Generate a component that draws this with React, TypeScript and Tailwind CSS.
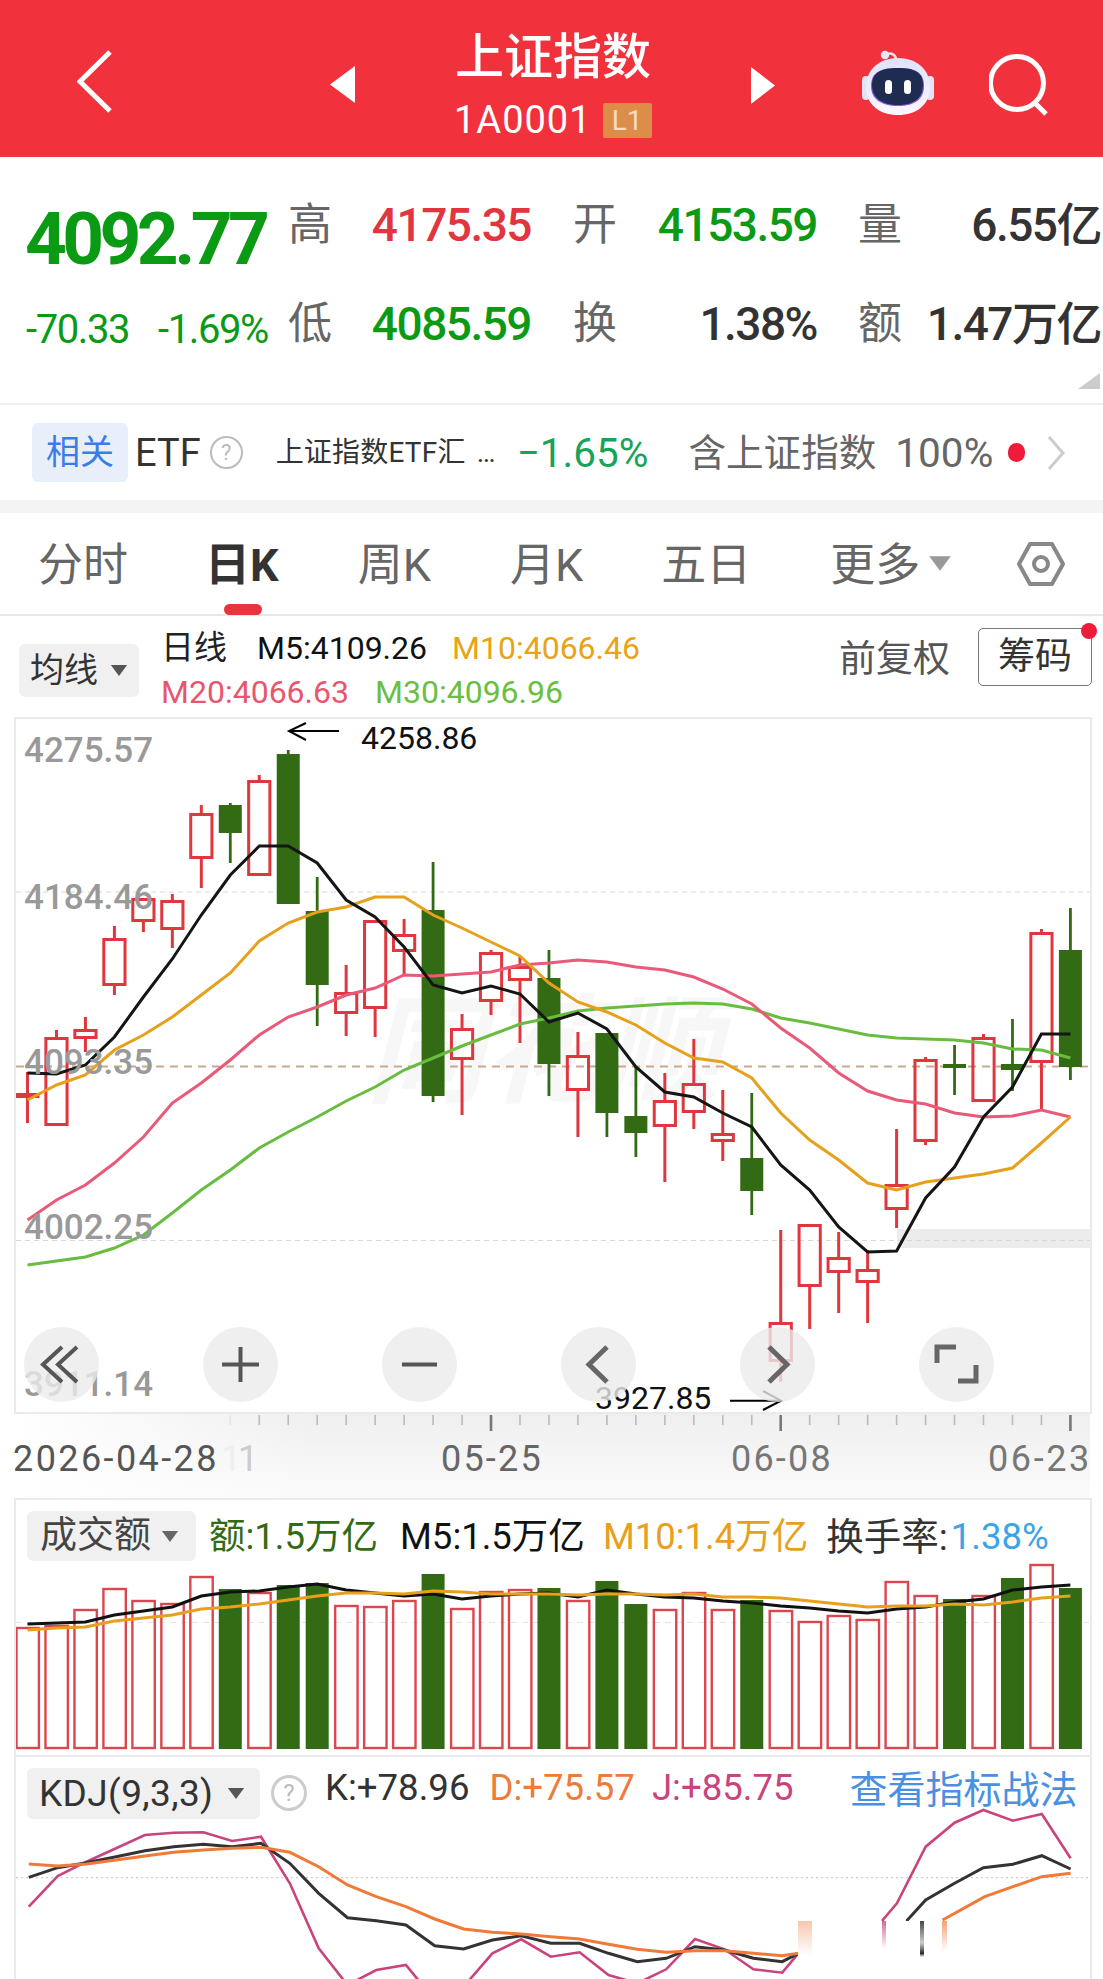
import React from 'react';

const X = (i: number) => 27.5 + 28.97 * i;
const pts = (a: number[]) => a.map((y, i) => `${X(i).toFixed(1)},${y}`).join(' ');
const zp = (a: number[][]) => a.map(([x, y]) => `${(x / 1.4216).toFixed(1)},${(1740 + y / 3).toFixed(1)}`).join(' ');

const RED = '#e0363d';
const GREEN = '#336a14';

// wickTop, bodyTop, bodyBottom, wickBottom, up(1)/down(0)
const candles: number[][] = [
  [1072, 1093, 1098, 1123, 2],
  [1030, 1037, 1126, 1126, 1],
  [1017, 1029, 1039, 1052, 1],
  [926, 938, 986, 995, 1],
  [898, 898, 922, 932, 1],
  [894, 900, 930, 948, 1],
  [805, 813, 859, 888, 1],
  [803, 805, 833, 863, 0],
  [775, 780, 876, 876, 1],
  [750, 754, 904, 904, 0],
  [877, 911, 985, 1026, 0],
  [965, 992, 1014, 1036, 1],
  [920, 920, 1009, 1037, 1],
  [919, 934, 952, 975, 1],
  [862, 910, 1096, 1102, 0],
  [1014, 1028, 1060, 1115, 1],
  [950, 952, 1002, 1015, 1],
  [957, 966, 981, 1043, 1],
  [950, 978, 1064, 1096, 0],
  [1032, 1055, 1091, 1137, 1],
  [1033, 1033, 1113, 1137, 0],
  [1067, 1116, 1133, 1157, 0],
  [1073, 1100, 1127, 1182, 1],
  [1039, 1083, 1113, 1129, 1],
  [1090, 1133, 1142, 1161, 1],
  [1093, 1158, 1191, 1215, 0],
  [1230, 1322, 1362, 1382, 1],
  [1224, 1224, 1287, 1329, 1],
  [1232, 1257, 1273, 1313, 1],
  [1250, 1269, 1283, 1323, 1],
  [1129, 1184, 1210, 1228, 1],
  [1057, 1059, 1142, 1145, 1],
  [1045, 1064, 1068, 1095, 0],
  [1034, 1037, 1102, 1102, 1],
  [1019, 1064, 1070, 1091, 0],
  [929, 932, 1063, 1110, 1],
  [908, 950, 1067, 1080, 0],
];

const ma5 = [1073, 1074, 1065, 1037, 997, 959, 915, 875, 846, 846, 863, 900, 917, 947, 985, 993, 986, 994, 1022, 1013, 1029, 1067, 1092, 1097, 1113, 1127, 1165, 1190, 1227, 1252, 1251, 1198, 1167, 1117, 1087, 1034, 1034];
const ma10 = [1100, 1085, 1075, 1050, 1035, 1017, 995, 973, 941, 923, 912, 907, 897, 897, 915, 928, 942, 956, 983, 1002, 1012, 1025, 1043, 1058, 1062, 1078, 1113, 1140, 1160, 1183, 1190, 1182, 1178, 1174, 1168, 1143, 1117];
const ma20 = [1220, 1200, 1185, 1163, 1137, 1103, 1083, 1060, 1035, 1017, 1007, 995, 988, 975, 976, 974, 972, 965, 963, 960, 962, 967, 970, 977, 989, 1004, 1028, 1048, 1073, 1091, 1100, 1104, 1113, 1117, 1116, 1110, 1117];
const ma30 = [1265, 1261, 1257, 1248, 1235, 1213, 1190, 1170, 1148, 1132, 1117, 1101, 1087, 1070, 1058, 1046, 1035, 1024, 1018, 1011, 1008, 1006, 1004, 1003, 1004, 1009, 1018, 1023, 1029, 1035, 1038, 1039, 1040, 1043, 1049, 1050, 1058];

const vols: number[][] = [
  [1627, 1], [1625, 1], [1609, 1], [1588, 1], [1600, 1], [1603, 1], [1576, 1], [1589, 0], [1592, 1], [1585, 0],
  [1583, 0], [1605, 1], [1606, 1], [1600, 1], [1574, 0], [1608, 1], [1591, 1], [1589, 1], [1588, 0], [1600, 1],
  [1581, 0], [1604, 0], [1609, 1], [1592, 1], [1609, 1], [1600, 0], [1610, 1], [1621, 1], [1615, 1], [1619, 1],
  [1581, 1], [1595, 1], [1599, 0], [1595, 1], [1578, 0], [1564, 1], [1588, 0],
];
const vm5 = [1624, 1623, 1622, 1615, 1611, 1607, 1596, 1592, 1591, 1587, 1584, 1590, 1593, 1596, 1594, 1599, 1596, 1594, 1593, 1597, 1590, 1594, 1597, 1598, 1601, 1603, 1606, 1608, 1611, 1613, 1609, 1607, 1602, 1599, 1590, 1587, 1585];
const vm10 = [1630, 1628, 1627, 1621, 1618, 1615, 1609, 1607, 1604, 1600, 1596, 1593, 1593, 1594, 1591, 1592, 1594, 1594, 1594, 1595, 1594, 1594, 1595, 1594, 1597, 1597, 1598, 1601, 1604, 1607, 1606, 1606, 1604, 1605, 1602, 1598, 1596];

const kLine = [[41, 412], [82, 383], [123, 368], [165, 350], [206, 332], [247, 320], [289, 313], [330, 320], [371, 310], [412, 370], [453, 460], [494, 533], [535, 542], [577, 555], [618, 617], [659, 627], [700, 600], [741, 587], [783, 610], [824, 610], [865, 640], [906, 665], [947, 655], [988, 620], [1030, 630], [1071, 655], [1112, 665], [1135, 640]];
const kTail = [[1290, 640], [1290, 540], [1316, 480], [1357, 430], [1398, 383], [1440, 373], [1481, 347], [1522, 387]];
const dLine = [[41, 372], [82, 378], [123, 372], [165, 360], [206, 348], [247, 337], [289, 330], [330, 325], [371, 322], [412, 337], [453, 380], [494, 435], [535, 470], [577, 500], [618, 537], [659, 567], [700, 577], [741, 582], [783, 590], [824, 597], [865, 613], [906, 628], [947, 637], [988, 632], [1030, 632], [1071, 640], [1112, 647], [1135, 640]];
const dTail = [[1340, 540], [1400, 470], [1440, 440], [1481, 410], [1522, 400]];
const jLine = [[41, 500], [82, 408], [123, 365], [165, 325], [206, 285], [247, 278], [289, 277], [330, 303], [371, 290], [412, 430], [453, 625], [494, 735], [535, 690], [577, 675], [618, 780], [659, 740], [700, 640], [741, 598], [783, 650], [824, 637], [865, 705], [906, 730], [947, 688], [988, 597], [1030, 628], [1071, 688], [1112, 698], [1135, 640]];
const jTail = [[1255, 640], [1255, 540], [1275, 490], [1316, 320], [1357, 248], [1398, 210], [1440, 242], [1481, 222], [1522, 355]];

function Tri({ className }: { className: string }) {
  return (
    <svg viewBox="0 0 20 14" className={className}>
      <path d="M1 1h18L10 13z" fill="currentColor" />
    </svg>
  );
}

function Stat({ label, value, color, w, ml }: { label: string; value: string; color: string; w: string; ml: string }) {
  return (
    <div className={`flex items-center ${w} ${ml}`}>
      <span className="w-[44px] text-[44px] leading-[44px] text-[#666]">{label}</span>
      <span className={`flex-1 text-right text-[46px] leading-[44px] font-medium tracking-[-1.5px] ${color}`}>{value}</span>
    </div>
  );
}

function Round({ children }: { children: React.ReactNode }) {
  return (
    <div className="w-[75px] h-[75px] rounded-full bg-[#ebebeb]/80">
      <svg viewBox="0 0 75 75" className="w-[75px] h-[75px]" fill="none" stroke="#555" strokeWidth="4">
        {children}
      </svg>
    </div>
  );
}

function Watermark() {
  return (
    <div className="absolute left-[350px] top-[275px] text-[118px] leading-[118px] font-bold italic text-[#f7f7f7] whitespace-nowrap">
      同花顺
    </div>
  );
}

function CandleChart() {
  return (
    <svg viewBox="16 719 1074 693" className="block w-[1074px] h-[693px] relative">
      <rect x="897" y="1229" width="193" height="19" fill="#ececec" />
      <line x1="16" x2="1090" y1="892" y2="892" stroke="#d8d8d8" strokeDasharray="5 4" strokeWidth="1" />
      <line x1="16" x2="1090" y1="1240.5" y2="1240.5" stroke="#d8d8d8" strokeDasharray="5 4" strokeWidth="1" />
      <line x1="16" x2="1090" y1="1066.5" y2="1066.5" stroke="#c9a88f" strokeDasharray="8 6" strokeWidth="2" />
      {candles.map((c, i) => {
        const x = X(i);
        const [wt, bt, bb, wb, up] = c;
        if (up === 0) {
          return (
            <g key={i}>
              <line x1={x} x2={x} y1={wt} y2={wb} stroke={GREEN} strokeWidth="2.8" />
              <rect x={x - 11.5} y={bt} width="23" height={bb - bt} fill={GREEN} />
            </g>
          );
        }
        if (up === 2) {
          return (
            <g key={i}>
              <line x1={x} x2={x} y1={wt} y2={wb} stroke={RED} strokeWidth="3" />
              <rect x={x - 12} y={bt} width="24" height={bb - bt} fill={RED} />
            </g>
          );
        }
        return (
          <g key={i}>
            <line x1={x} x2={x} y1={wt} y2={bt} stroke={RED} strokeWidth="3" />
            <line x1={x} x2={x} y1={bb} y2={wb} stroke={RED} strokeWidth="3" />
            <rect x={x - 10.6} y={bt + 1.5} width="21.2" height={bb - bt - 3} fill="none" stroke={RED} strokeWidth="3" />
          </g>
        );
      })}
      <polyline points={pts(ma30)} fill="none" stroke="#68bd41" strokeWidth="3" />
      <polyline points={pts(ma20)} fill="none" stroke="#e85a78" strokeWidth="3" />
      <polyline points={pts(ma10)} fill="none" stroke="#e6a01c" strokeWidth="3" />
      <polyline points={pts(ma5)} fill="none" stroke="#151515" strokeWidth="3" />
      <path d="M339 731H289M306 723L289 731L306 740" fill="none" stroke="#000" strokeWidth="2" />
      <path d="M730 1400.7H781M763 1391L781 1400.7L763 1410" fill="none" stroke="#000" strokeWidth="2" />
    </svg>
  );
}

function AxisTicks() {
  const ticks = Array.from({ length: 37 }, (_, i) => i).filter((i) => i >= 7);
  return (
    <svg viewBox="14 1414 1076 20" className="absolute left-0 top-0 w-[1076px] h-[20px]">
      {ticks.map((i) => {
        const major = i === 16 || i === 26 || i === 36;
        return (
          <line key={i} x1={X(i)} x2={X(i)} y1="1415" y2={major ? 1431 : 1425} stroke={major ? '#777' : i === 7 ? '#e6e6e6' : '#bbb'} strokeWidth={major ? 2.6 : 1.6} />
        );
      })}
    </svg>
  );
}

function VolumeChart() {
  return (
    <svg viewBox="16 1563 1074 190" className="block w-[1074px] h-[190px]">
      <line x1="16" x2="1090" y1="1622.5" y2="1622.5" stroke="#e4e4e4" strokeDasharray="6 5" strokeWidth="1" />
      {vols.map(([t, up], i) => {
        const x = X(i);
        return up ? (
          <rect key={i} x={x - 11} y={t + 1} width="22.4" height={1747 - t} fill="none" stroke="#dc464f" strokeWidth="2.4" />
        ) : (
          <rect key={i} x={x - 11.5} y={t} width="23" height={1749 - t} fill={GREEN} />
        );
      })}
      <polyline points={pts(vm5)} fill="none" stroke="#111" strokeWidth="3" />
      <polyline points={pts(vm10)} fill="none" stroke="#e8a01c" strokeWidth="3" />
    </svg>
  );
}

function KdjChart() {
  return (
    <svg viewBox="16 1805 1074 174" className="block w-[1074px] h-[174px]">
      <defs>
        <linearGradient id="fk" x1="0" y1="0" x2="0" y2="1">
          <stop offset="0" stopColor="#333" stopOpacity="0.9" />
          <stop offset="0.6" stopColor="#333" stopOpacity="0.25" />
          <stop offset="0.9" stopColor="#111" stopOpacity="0.9" />
          <stop offset="1" stopColor="#111" stopOpacity="0" />
        </linearGradient>
        <linearGradient id="fp" x1="0" y1="0" x2="0" y2="1">
          <stop offset="0" stopColor="#c9447e" stopOpacity="0.8" />
          <stop offset="1" stopColor="#c9447e" stopOpacity="0" />
        </linearGradient>
        <linearGradient id="fo" x1="0" y1="0" x2="0" y2="1">
          <stop offset="0" stopColor="#f07a38" stopOpacity="0.7" />
          <stop offset="1" stopColor="#f07a38" stopOpacity="0" />
        </linearGradient>
      </defs>
      <line x1="16" x2="1090" y1="1877.7" y2="1877.7" stroke="#ccc" strokeDasharray="2 3" strokeWidth="1.2" />
      <polyline points={zp(jLine)} fill="none" stroke="#c9447e" strokeWidth="2.6" />
      <polyline points={zp(kLine)} fill="none" stroke="#333" strokeWidth="3" />
      <polyline points={zp(dLine)} fill="none" stroke="#f07a38" strokeWidth="3" />
      <polyline points={zp(jTail)} fill="none" stroke="#c9447e" strokeWidth="2.6" />
      <polyline points={zp(kTail)} fill="none" stroke="#333" strokeWidth="3" />
      <polyline points={zp(dTail)} fill="none" stroke="#f07a38" strokeWidth="3" />
      <rect x="798" y="1921" width="278" height="40" fill="#fff" />
      <rect x="798" y="1921" width="14" height="34" fill="url(#fo)" opacity="0.6" />
      <rect x="882" y="1921" width="4" height="28" fill="url(#fp)" />
      <rect x="920" y="1921" width="4" height="36" fill="url(#fk)" />
      <rect x="942" y="1921" width="5" height="30" fill="url(#fo)" />
    </svg>
  );
}

export default function App() {
  return (
    <div className="w-[1103px] h-[1979px] overflow-hidden bg-white font-[Roboto,'Noto_Sans_CJK_SC',sans-serif]">
      {/* Header */}
      <header className="h-[157px] bg-[#f1323d] flex items-start text-white">
        <svg viewBox="0 0 35 63" className="w-[35px] h-[63px] ml-[77px] mt-[50px]" fill="none" stroke="#fff" strokeWidth="5">
          <path d="M33 2L3 31.5L33 61" />
        </svg>
        <svg viewBox="0 0 25 37" className="w-[25px] h-[37px] ml-[218px] mt-[66px]">
          <path d="M25 0V37L0 18.5z" fill="#fff" />
        </svg>
        <div className="w-[200px] ml-[98px] mt-[33px] flex flex-col">
          <div className="text-[49px] leading-[49px] font-medium text-center whitespace-nowrap">上证指数</div>
          <div className="flex items-center mt-[21px] pl-[1px]">
            <span className="text-[38px] leading-[35px] tracking-[1px]">1A0001</span>
            <span className="ml-[11px] w-[49px] h-[35px] bg-[#dd8d4a] rounded-[2px] text-[#f7dcc0] text-[28px] leading-[35px] text-center">L1</span>
          </div>
        </div>
        <svg viewBox="0 0 24 37" className="w-[24px] h-[37px] ml-[98px] mt-[67px]">
          <path d="M0 0V37L24 18.5z" fill="#fff" />
        </svg>
        <svg viewBox="0 0 74 66" className="w-[74px] h-[66px] ml-[86px] mt-[49px]">
          <defs>
            <linearGradient id="head" x1="0" y1="0" x2="0" y2="1">
              <stop offset="0" stopColor="#dfe2f8" />
              <stop offset="1" stopColor="#fbf7ff" />
            </linearGradient>
          </defs>
          <path d="M24 6C30 3 34 5 35 10" fill="none" stroke="#f4dfe6" strokeWidth="2.5" />
          <circle cx="24" cy="6" r="4.2" fill="#e9e8fb" />
          <rect x="1" y="27" width="8" height="24" rx="4" fill="#e3e3f6" />
          <rect x="65" y="27" width="8" height="24" rx="4" fill="#e3e3f6" />
          <path d="M37 9C55 9 69 20 69 38C69 56 55 66 37 66C19 66 5 56 5 38C5 20 19 9 37 9z" fill="url(#head)" />
          <path d="M37 19C54 19 63 23 63 37C63 50 54 57 37 57C20 57 10 50 10 37C10 23 20 19 37 19z" fill="#7b5bd8" />
          <path d="M37 19C53 19 62 23 62 36C62 49 53 56 37 56C21 56 11 49 11 36C11 23 21 19 37 19z" fill="#1f2c52" />
          <rect x="24" y="31" width="7" height="14" rx="3.5" fill="#fff" />
          <rect x="43" y="31" width="7" height="14" rx="3.5" fill="#fff" />
        </svg>
        <svg viewBox="0 0 60 66" className="w-[60px] h-[66px] ml-[54px] mt-[50px]" fill="none" stroke="#fff" strokeWidth="5">
          <circle cx="28" cy="33" r="26.5" />
          <path d="M46 53L57 64" />
        </svg>
      </header>

      {/* Quote stats */}
      <section className="h-[248px] border-b-2 border-[#eee] relative pt-[18px]">
        <div className="flex h-[99px] items-center">
          <div className="w-[288px] pl-[25px] pt-[30px] text-[73px] leading-[71px] font-bold tracking-[-4.6px] text-[#0a9a14]">4092.77</div>
          <Stat label="高" value="4175.35" color="text-[#e1363f]" w="w-[243px]" ml="ml-[0px]" />
          <Stat label="开" value="4153.59" color="text-[#0a9a14]" w="w-[244px]" ml="ml-[42px]" />
          <Stat label="量" value="6.55亿" color="text-[#333]" w="w-[243px]" ml="ml-[41px]" />
        </div>
        <div className="flex h-[99px] items-center">
          <div className="w-[288px] pl-[26px] pt-[12px] flex text-[#0a9a14] text-[40px] leading-[40px] tracking-[-1.4px]">
            <span className="w-[132px]">-70.33</span>
            <span>-1.69%</span>
          </div>
          <Stat label="低" value="4085.59" color="text-[#0a9a14]" w="w-[243px]" ml="ml-[0px]" />
          <Stat label="换" value="1.38%" color="text-[#333]" w="w-[244px]" ml="ml-[42px]" />
          <Stat label="额" value="1.47万亿" color="text-[#333]" w="w-[243px]" ml="ml-[41px]" />
        </div>
        <svg viewBox="0 0 22 16" className="absolute right-[3px] top-[216px] w-[22px] h-[16px]">
          <path d="M22 0V16H0z" fill="#ccc" />
        </svg>
      </section>

      {/* ETF row */}
      <section className="h-[95px] flex items-center">
        <div className="ml-[32px] w-[96px] h-[59px] rounded-[6px] bg-[#e8effb] text-[#3a7ce8] text-[34px] leading-[59px] text-center">相关</div>
        <span className="ml-[7px] text-[38px] leading-[40px] text-[#333]">ETF</span>
        <span className="ml-[9px] w-[33px] h-[33px] rounded-full border-2 border-[#bbb] text-[#bbb] text-[22px] leading-[29px] text-center">?</span>
        <span className="ml-[33px] text-[28px] leading-[40px] text-[#333] w-[224px] whitespace-nowrap tracking-[0.2px]">
          上证指数ETF汇<span className="ml-[11px] tracking-[-2px]">…</span>
        </span>
        <span className="ml-[17px] text-[40.5px] leading-[40px] text-[#17a45a]">−1.65%</span>
        <span className="ml-[40px] text-[37.6px] leading-[40px] text-[#666] whitespace-nowrap">含上证指数</span>
        <span className="ml-[19px] text-[40.5px] leading-[40px] text-[#666]">100%</span>
        <span className="ml-[15px] w-[17px] h-[19px] rounded-full bg-[#ee1c3a]" />
        <svg viewBox="0 0 18 34" className="ml-[22px] w-[18px] h-[34px]" fill="none" stroke="#ccc" strokeWidth="3">
          <path d="M2 1L16 17L2 33" />
        </svg>
      </section>

      <div className="h-[13px] bg-[#f4f4f4]" />

      {/* Period tabs */}
      <nav className="h-[103px] border-b-2 border-[#e8e8e8] flex items-start pt-[31px] text-[45px] leading-[44px] text-[#666]">
        <span className="ml-[38px]">分时</span>
        <span className="ml-[77px] relative font-bold text-[#333]">
          日K
          <span className="absolute left-[19px] top-[60px] w-[38px] h-[11px] rounded-full bg-[#e8343c]" />
        </span>
        <span className="ml-[79px]">周K</span>
        <span className="ml-[79px]">月K</span>
        <span className="ml-[78px]">五日</span>
        <span className="ml-[79px]">更多</span>
        <Tri className="ml-[8px] mt-[10px] w-[24px] h-[19px] text-[#999]" />
        <svg viewBox="0 0 48 44" className="ml-[65px] -mt-[2px] w-[48px] h-[44px]" fill="none" stroke="#888" strokeWidth="4">
          <path d="M13 2H35L46 22L35 42H13L2 22z" strokeLinejoin="round" />
          <circle cx="24" cy="22" r="7" />
        </svg>
      </nav>

      {/* Indicator controls */}
      <section className="h-[101px] flex items-start">
        <div className="ml-[19px] mt-[28px] w-[120px] h-[53px] rounded-[6px] bg-[#f0f0f0] flex items-center pl-[11px] text-[#333] text-[34px]">
          均线
          <Tri className="ml-[12px] w-[18px] h-[13px] text-[#555]" />
        </div>
        <div className="ml-[22px] mt-[16px] w-[678px] text-[32px] leading-[32px]">
          <div className="flex">
            <span className="w-[96px] text-[33px] text-[#222]">日线</span>
            <span className="w-[195px] text-[#111]">M5:4109.26</span>
            <span className="text-[#e8a317]">M10:4066.46</span>
          </div>
          <div className="flex mt-[12px]">
            <span className="w-[214px] text-[#e8566e]">M20:4066.63</span>
            <span className="text-[#6abf40]">M30:4096.96</span>
          </div>
        </div>
        <span className="mt-[25px] text-[37px] leading-[37px] text-[#555] whitespace-nowrap">前复权</span>
        <div className="relative ml-[28px] mt-[12px] w-[114px] h-[58px] border-[1.5px] border-[#777] rounded-[5px] text-[37px] leading-[55px] text-[#333] text-center">
          筹码
          <span className="absolute right-[-6px] top-[-6px] w-[16px] h-[16px] rounded-full bg-[#ee1c3a]" />
        </div>
      </section>

      {/* Candle chart */}
      <section className="relative ml-[14px] w-[1078px] h-[697px] border-2 border-[#eaeaea]">
        <Watermark />
        <CandleChart />
        <span className="absolute left-[8px] top-[14px] text-[35px] leading-[35px] font-medium text-[#999]">4275.57</span>
        <span className="absolute left-[8px] top-[161px] text-[35px] leading-[35px] font-medium text-[#999]">4184.46</span>
        <span className="absolute left-[8px] top-[326px] text-[35px] leading-[35px] font-medium text-[#999]">4093.35</span>
        <span className="absolute left-[8px] top-[491px] text-[35px] leading-[35px] font-medium text-[#999]">4002.25</span>
        <span className="absolute left-[8px] top-[648px] text-[35px] leading-[35px] font-medium text-[#999]">3911.14</span>
        <span className="absolute left-[345px] top-[3px] text-[32px] leading-[33px] text-[#111]">4258.86</span>
        <span className="absolute left-[579px] top-[663px] text-[32px] leading-[33px] text-[#111]">3927.85</span>
        <div className="absolute left-[8px] top-[608px] flex gap-[104px]">
          <Round>
            <path d="M38 20L19 37.5L38 55M53 20L34 37.5L53 55" />
          </Round>
          <Round>
            <path d="M19 37.5H56M37.5 20V55" />
          </Round>
          <Round>
            <path d="M20 37.5H55" />
          </Round>
          <Round>
            <path d="M46 20L28 37.5L46 55" strokeWidth="5" stroke="#666" />
          </Round>
          <Round>
            <path d="M29 20L47 37.5L29 55" strokeWidth="5" stroke="#666" />
          </Round>
          <Round>
            <path d="M18 36V20H37M57 38V54H39" strokeWidth="5" stroke="#666" />
          </Round>
        </div>
      </section>

      {/* Time axis */}
      <section className="relative ml-[14px] w-[1076px] h-[84px] bg-linear-to-b from-[#efefef] to-[#fbfbfb]">
        <div className="absolute left-0 top-0 w-[300px] h-[84px] bg-linear-to-r from-white to-transparent" />
        <AxisTicks />
        <span className="absolute left-[207px] top-[27px] text-[36px] leading-[36px] text-[#eee]">1</span>
        <span className="absolute left-[224px] top-[27px] text-[36px] leading-[36px] text-[#ccc]">1</span>
        <span className="absolute -left-[1px] top-[27px] text-[36px] leading-[36px] tracking-[2.4px] text-[#555] whitespace-nowrap">2026-04-28</span>
        <span className="absolute left-[427px] top-[27px] text-[36px] leading-[36px] tracking-[2.2px] text-[#666]">05-25</span>
        <span className="absolute left-[717px] top-[27px] text-[36px] leading-[36px] tracking-[2.2px] text-[#777]">06-08</span>
        <span className="absolute left-[974px] top-[27px] text-[36px] leading-[36px] tracking-[2.6px] text-[#777] whitespace-nowrap">06-23</span>
      </section>

      {/* Turnover */}
      <section className="ml-[14px] w-[1078px] h-[257px] border-x-2 border-t-2 border-[#eaeaea]">
        <div className="h-[63px] flex items-start text-[36.5px] leading-[36px] whitespace-nowrap">
          <div className="ml-[11px] mt-[11px] w-[169px] h-[50px] rounded-[6px] bg-[#f0f0f0] flex items-center pl-[13px] text-[37px] text-[#444]">
            成交额
            <Tri className="ml-[10px] w-[18px] h-[13px] text-[#666]" />
          </div>
          <span className="ml-[13px] mt-[19px] text-[#336a14]">额:1.5万亿</span>
          <span className="ml-[22px] mt-[19px] text-[#111]">M5:1.5万亿</span>
          <span className="ml-[18px] mt-[19px] text-[#e8a01c]">M10:1.4万亿</span>
          <span className="ml-[18px] mt-[19px] text-[#333] text-[37.5px]">换手率:</span>
          <span className="ml-[3px] mt-[19px] text-[#3aa4e8]">1.38%</span>
        </div>
        <VolumeChart />
      </section>

      {/* KDJ */}
      <section className="ml-[14px] w-[1078px] h-[224px] border-x-2 border-t-2 border-[#eaeaea]">
        <div className="h-[48px] flex items-start whitespace-nowrap">
          <div className="ml-[11px] mt-[11px] w-[233px] h-[51px] rounded-[6px] bg-[#f0f0f0] flex items-center pl-[12px] text-[37px] tracking-[0.4px] text-[#333]">
            KDJ(9,3,3)
            <Tri className="ml-[14px] w-[18px] h-[13px] text-[#555]" />
          </div>
          <span className="ml-[11px] mt-[18px] w-[36px] h-[36px] rounded-full border-[3px] border-[#ccc] text-[#bbb] text-[24px] leading-[30px] text-center">?</span>
          <span className="ml-[18px] mt-[13px] text-[36.6px] leading-[36px] text-[#333]">K:+78.96</span>
          <span className="ml-[20px] mt-[13px] text-[36.6px] leading-[36px] text-[#f07a38]">D:+75.57</span>
          <span className="ml-[17px] mt-[13px] text-[36.6px] leading-[36px] text-[#c8447e]">J:+85.75</span>
          <span className="ml-[56px] mt-[15px] text-[38px] leading-[37px] text-[#4a90e2]">查看指标战法</span>
        </div>
        <KdjChart />
      </section>
    </div>
  );
}
